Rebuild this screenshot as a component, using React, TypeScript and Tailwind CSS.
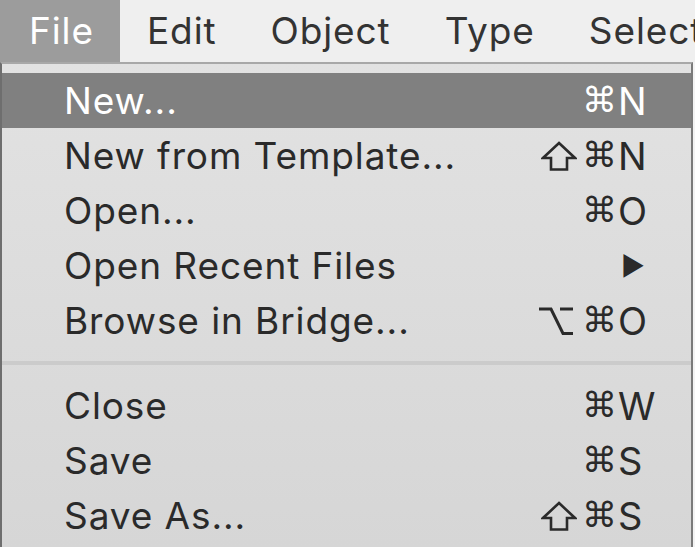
import React from 'react'

type Item = {
  label: string
  mods?: string[]
  keyChar?: string
  arrow?: boolean
  active?: boolean
}

const groupA: Item[] = [
  { label: 'New...', mods: ['cmd'], keyChar: 'N', active: true },
  { label: 'New from Template...', mods: ['shift', 'cmd'], keyChar: 'N' },
  { label: 'Open...', mods: ['cmd'], keyChar: 'O' },
  { label: 'Open Recent Files', arrow: true },
  { label: 'Browse in Bridge...', mods: ['opt', 'cmd'], keyChar: 'O' },
]

const groupB: Item[] = [
  { label: 'Close', mods: ['cmd'], keyChar: 'W' },
  { label: 'Save', mods: ['cmd'], keyChar: 'S' },
  { label: 'Save As...', mods: ['shift', 'cmd'], keyChar: 'S' },
]

const Mod = ({ name }: { name: string }) => {
  if (name === 'shift') {
    return (
      <svg width="36" height="30" viewBox="0 0 36 30" className="mr-[5px]">
        <path
          d="M18 2 L34 17 L26 17 L26 28.5 L10 28.5 L10 17 L2 17 Z"
          fill="none"
          stroke="currentColor"
          strokeWidth="2.6"
          strokeLinejoin="miter"
        />
      </svg>
    )
  }
  if (name === 'opt') {
    return (
      <svg width="36" height="30" viewBox="0 0 36 30" className="mr-[8px]">
        <path
          d="M1 3 L13 3 L25 27.5 L35 27.5 M22 3 L35 3"
          fill="none"
          stroke="currentColor"
          strokeWidth="3"
        />
      </svg>
    )
  }
  return (
    <span className="font-['DejaVu_Sans',sans-serif] text-[35px] leading-none">⌘</span>
  )
}

const MenuRow = ({ item }: { item: Item }) => {
  const color = item.active ? 'bg-[#808080] text-white' : 'text-[#2a2a2a]'
  return (
    <div className={`flex h-[55px] items-center pl-[62px] ${color}`}>
      <span className="flex-1 text-[37px] leading-none tracking-[0.9px]">{item.label}</span>
      {item.arrow ? (
        <span className="w-[74px] pl-[4px] text-[26px] leading-none">▶</span>
      ) : (
        <>
          <span className="flex items-center">
            {item.mods?.map((m, i) => (
              <Mod key={i} name={m} />
            ))}
          </span>
          <span className="w-[74px] pl-[1px] text-[38px] leading-none">{item.keyChar}</span>
        </>
      )}
    </div>
  )
}

export default function App() {
  const menus = ['Edit', 'Object', 'Type', 'Select']
  return (
    <div className="h-[547px] w-[695px] overflow-hidden bg-[#f3f3f3] font-['Inter',sans-serif]">
      <div className="flex h-[62px] items-center overflow-hidden bg-[#efefef] text-[37px] tracking-[0.9px] text-[#333]">
        <div className="flex h-full items-center bg-[#9c9c9c] pl-[29px] pr-[26px] text-white">File</div>
        {menus.map((m) => (
          <div key={m} className="shrink-0 px-[27px] whitespace-nowrap">
            {m}
          </div>
        ))}
      </div>
      <div className="flex h-[485px] w-[693px] flex-col border-x-2 border-t-2 border-l-[#6e6e6e] border-r-[#7a7a7a] border-t-[#a8a8a8] bg-gradient-to-b from-[#e2e2e2] to-[#d6d6d6] pt-[9px]">
        {groupA.map((it) => (
          <MenuRow key={it.label} item={it} />
        ))}
        <div className="flex h-[30px] items-center">
          <div className="h-[4px] w-full bg-[#cbcbcb]"></div>
        </div>
        {groupB.map((it) => (
          <MenuRow key={it.label} item={it} />
        ))}
      </div>
    </div>
  )
}
